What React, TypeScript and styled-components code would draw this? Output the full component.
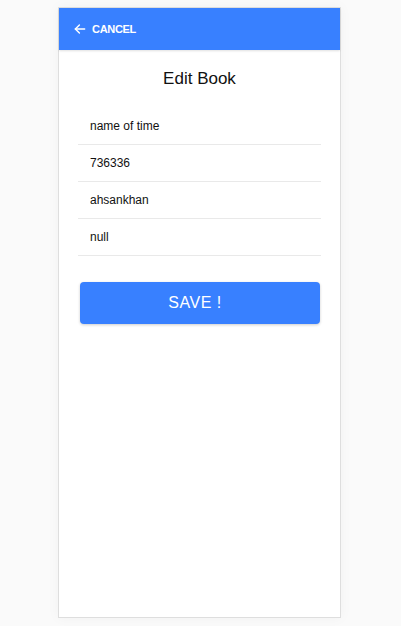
import React from 'react'
import styled, { createGlobalStyle } from 'styled-components'

const GlobalStyle = createGlobalStyle`
  html, body {
    margin: 0;
    padding: 0;
    background: #fafafa;
    font-family: 'Liberation Sans', Arial, sans-serif;
  }
`

const fields = ['name of time', '736336', 'ahsankhan', 'null']

const App = () => {
  return (
    <>
      <GlobalStyle />
      <Page>
        <Card>
          <Header>
            <CancelButton>
              <svg width="14" height="14" viewBox="0 0 24 24" fill="none" stroke="#fff" strokeWidth="2.4" strokeLinecap="round" strokeLinejoin="round">
                <path d="M20 12H4" />
                <path d="M11 5l-7 7 7 7" />
              </svg>
              <CancelLabel>{'CANCEL'}</CancelLabel>
            </CancelButton>
          </Header>
          <Content>
            <Title>{'Edit Book'}</Title>
            <FieldList>
              {fields.map((value) => (
                <FieldRow key={value}>
                  <FieldInput defaultValue={value} />
                </FieldRow>
              ))}
            </FieldList>
            <SaveButton>{'SAVE !'}</SaveButton>
          </Content>
        </Card>
      </Page>
    </>
  )
}

export default App

const Page = styled.div`
  width: 401px;
  height: 626px;
  display: flex;
  padding: 7px 0 0 58px;
  box-sizing: border-box;
`

const Card = styled.div`
  width: 283px;
  height: 611px;
  box-sizing: border-box;
  background: #ffffff;
  border: 1px solid #dedede;
  box-shadow: 0 0 12px rgba(0, 0, 0, 0.04);
  display: flex;
  flex-direction: column;
`

const Header = styled.div`
  height: 42px;
  background: #3880ff;
  display: flex;
  align-items: center;
  padding-left: 14px;
  box-shadow: 0 1px 2px rgba(0, 0, 0, 0.12);
`

const CancelButton = styled.button`
  display: flex;
  align-items: center;
  gap: 5px;
  background: none;
  border: none;
  padding: 0;
  cursor: pointer;
`

const CancelLabel = styled.span`
  color: #ffffff;
  font-family: 'Liberation Sans', Arial, sans-serif;
  font-size: 11px;
  font-weight: bold;
  letter-spacing: -0.3px;
`

const Content = styled.div`
  display: flex;
  flex-direction: column;
  padding: 18px 19px 0 19px;
`

const Title = styled.h2`
  margin: 0;
  text-align: center;
  font-size: 17px;
  font-weight: normal;
  line-height: 22px;
  color: #111;
`

const FieldList = styled.div`
  display: flex;
  flex-direction: column;
  margin-top: 18px;
`

const FieldRow = styled.div`
  height: 37px;
  box-sizing: border-box;
  border-bottom: 1px solid #e9e9e9;
  display: flex;
  align-items: center;
`

const FieldInput = styled.input`
  width: 100%;
  border: none;
  outline: none;
  background: transparent;
  padding: 0 12px;
  font-family: 'Liberation Sans', Arial, sans-serif;
  font-size: 12px;
  color: #111;
`

const SaveButton = styled.button`
  margin: 26px 1px 0 2px;
  height: 42px;
  padding: 0 10px 0 0;
  background: #3880ff;
  color: #ffffff;
  border: none;
  border-radius: 4px;
  box-shadow: 0 1px 3px rgba(0, 0, 0, 0.2);
  font-family: 'Liberation Sans', Arial, sans-serif;
  font-size: 16px;
  font-weight: 500;
  letter-spacing: 0.5px;
  cursor: pointer;
`
